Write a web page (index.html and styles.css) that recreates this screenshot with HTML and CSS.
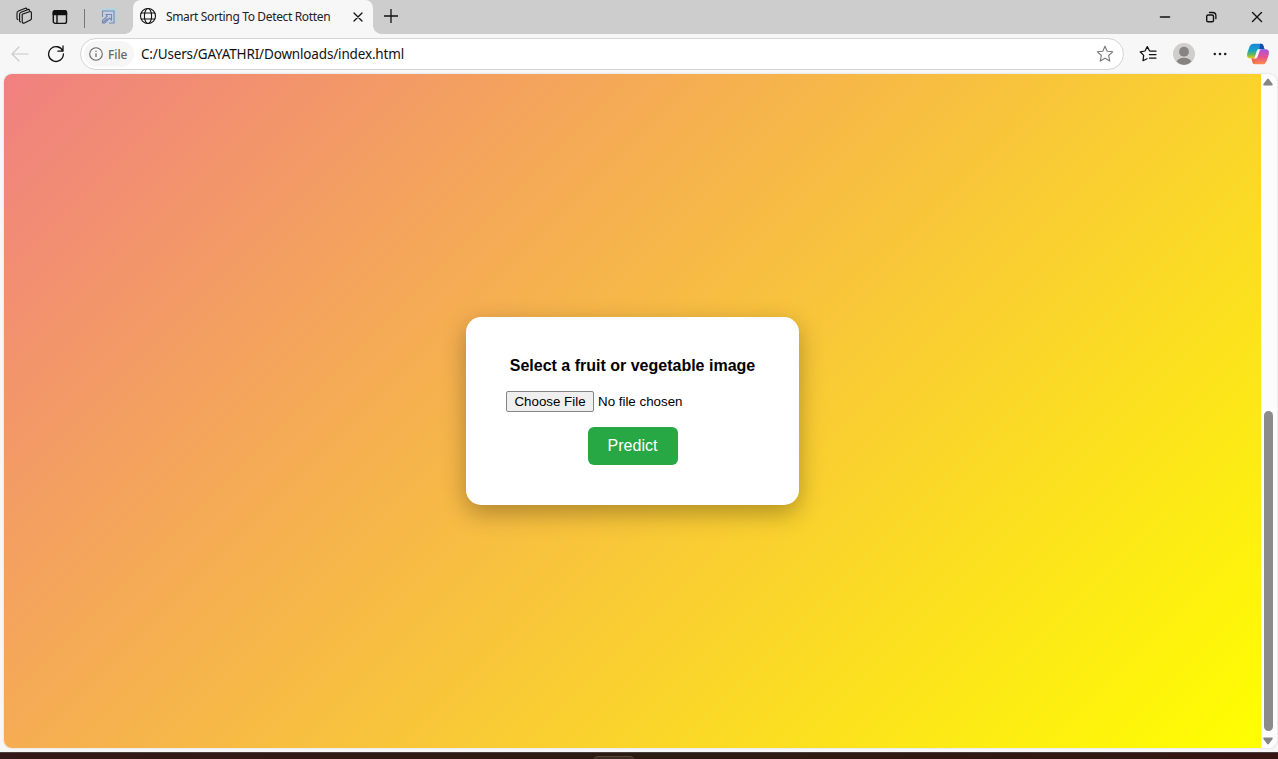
FILE: index.html
```html
<!DOCTYPE html>
<html lang="en">
<head>
<meta charset="utf-8">
<title>Smart Sorting To Detect Rotten</title>
<link rel="stylesheet" href="styles.css">
</head>
<body>
<div class="window">
  <header class="tabstrip">
    <svg class="ico workspaces" width="18" height="18" viewBox="0 0 18 18"><path d="M7.2 7.3 14.4 4.8q2-.6 2 1.3v5.3q0 1-1 1.5l-6 3q-2.2.8-2.2-1.3zM4.6 14V7.2q0-1.4 1.4-2l7.3-2.8M2 11.3V6q0-1.5 1.4-2L10.4 1.2M2 11.2q0 1 .9 1.4M4.6 13.8q0 .9.9 1.2M10.4 1.2q1.2-.2 1.5.8M13.3 2.4q1 0 1.2 1"/></svg>
    <svg class="ico tabs" width="16" height="16" viewBox="0 0 16 16"><rect x="1.3" y="1.8" width="13.2" height="12.6" rx="2"/><path d="M1.3 3.8q0-2 2-2h9.2q2 0 2 2v1.7H1.3z" fill="#111"/><path d="M5 5v9"/></svg>
    <span class="rule"></span>
    <svg class="pinned" width="18" height="18" viewBox="0 0 18 18"><path d="M2 1.500h13.500V14" stroke="#a5d8ea" stroke-width="2" opacity=".8"/><path d="M2.500 3H14v12H2.500z" fill="#c6cfe0"/><path d="M2.500 9V3H14v12H9M2.500 15l5-4.500M6 6.500h5.500V12L9.600 10l-4.800 5H2.500v-2.500l4.800-4.300z" stroke="#7589b3" stroke-width="1.1"/></svg>
    <div class="tab">
      <svg class="ico globe" width="18" height="18" viewBox="0 0 18 18"><circle cx="9" cy="9" r="7.5"/><ellipse cx="9" cy="9" rx="3.6" ry="7.5"/><path d="M2.2 6h13.6M2.2 12h13.6"/></svg>
      <span class="tab-title">Smart Sorting To Detect Rotten</span>
      <svg class="ico close" width="10" height="10" viewBox="0 0 10 10"><path d="m1 1 8 8M9 1 1 9"/></svg>
    </div>
    <svg class="ico plus" width="14" height="14" viewBox="0 0 14 14"><path d="M7 0v14M0 7h14"/></svg>
    <div class="controls">
      <svg class="ico" width="12" height="12" viewBox="0 0 12 12"><path stroke-width="1.6" d="M1.500 6h9"/></svg>
      <svg class="ico" width="12" height="12" viewBox="0 0 12 12"><rect x="1.7" y="4" width="6.8" height="6.8" rx="1.4" stroke-width="1.4"/><path stroke-width="1.3" d="M4.500 1.500h3.200q3.200 0 3.200 3.200v3"/></svg>
      <svg class="ico" width="12" height="12" viewBox="0 0 12 12"><path stroke-width="1.4" d="m1.500 1.500 9 9M10.500 1.500l-9 9"/></svg>
    </div>
  </header>

  <nav class="toolbar">
    <svg class="ico back" width="18" height="16" viewBox="0 0 18 16"><path d="M8 1 1 8l7 7M1 8h16"/></svg>
    <svg class="ico reload" width="18" height="18" viewBox="0 0 18 18"><path d="M15.8 6.1A7.4 7.4 0 1 0 16.4 9M16 1v5.2h-5.1" stroke-width="1.3"/></svg>
    <div class="address">
      <div class="badge">
        <svg width="14" height="14" viewBox="0 0 14 14"><circle cx="7" cy="7" r="6.3"/><path d="M7 6.2V10M7 3.7v1.2" stroke-width="1.2"/></svg>
        <span>File</span>
      </div>
      <span class="url">C:/Users/GAYATHRI/Downloads/index.html</span>
      <svg class="star" width="18" height="18" viewBox="0 0 18 18"><path d="m9 1.3 2.2 5 5.5.5-4.1 3.7 1.2 5.5L9 13.2 4.2 16l1.2-5.5-4.1-3.7 5.5-.5z"/></svg>
    </div>
    <svg class="ico favorites" width="18" height="18" viewBox="0 0 18 18"><path d="M12 6.2 10.6 6 8.3 1.6 6 6l-4.8.8 3.5 3.6L4 15.7l4-2M11.6 6.2H17M10.4 9.6H17M10.4 13H17" stroke-width="1.25"/></svg>
    <svg class="avatar" width="22" height="22" viewBox="0 0 22 22"><circle cx="11" cy="11" r="11" fill="#cfcecb"/><circle cx="11" cy="8.7" r="4.9" fill="#858482"/><path d="M3.6 18.4q2.2-3.7 7.4-3.7t7.4 3.7A11 11 0 0 1 11 22a11 11 0 0 1-7.4-3.6z" fill="#858482"/></svg>
    <svg class="more" width="14" height="4" viewBox="0 0 14 4"><circle cx="1.8" cy="2" r="1.3"/><circle cx="7" cy="2" r="1.3"/><circle cx="12.2" cy="2" r="1.3"/></svg>
    <svg class="copilot" width="22" height="22" viewBox="0 0 22 22">
      <defs>
        <linearGradient id="cool" x1="0" y1="0" x2="0" y2="1"><stop offset="0" stop-color="#1684dc"/><stop offset=".45" stop-color="#18a4c5"/><stop offset=".72" stop-color="#61b85c"/><stop offset="1" stop-color="#efcb25"/></linearGradient>
        <linearGradient id="warm" x1="0" y1="0" x2="0" y2="1"><stop offset="0" stop-color="#a256e8"/><stop offset=".5" stop-color="#e7528f"/><stop offset="1" stop-color="#ff8a47"/></linearGradient>
      </defs>
      <path d="M14 .8q1.7 0 2.3 1.7l1.2 3.8h-3.2q-1.7 0-2.2 1.6l-2 6.2q-.5 1.4-2 1.4H3.4Q.2 15.500 0 12.500q0-1.500.6-3.500l2-5.500Q3.600.8 6.500.8z" fill="url(#cool)"/>
      <path d="M13 .8h1.200q1.600 0 2.100 1.700l1.200 3.800h-3.200q-1.200 0-1.900 1z" fill="#154bb3"/>
      <path d="M8 21.200q-1.700 0-2.300-1.700l-1.200-4h3.200q1.700 0 2.200-1.600l2-6.200q.5-1.400 2-1.400h4.700q3.200 0 3.400 3 0 1.500-.6 3.500l-2 5.700q-1 2.700-3.900 2.700z" fill="url(#warm)"/>
      <path d="M4.500 15.500h3.200q1 0 1.800-1L7 21q-1-.4-1.300-1.500z" fill="#ed7040"/>
      <path d="M11.300 6.300h3q-1.200.2-1.600 1.400l-2.200 6.300q-.6 1.500-2.200 1.500H6.200q1.200-.1 1.600-1.200l2-6.500q.4-1.300 1.500-1.500z" fill="#f8f8f8"/>
    </svg>
  </nav>

  <div class="viewport">
    <main class="page">
      <form class="card">
        <label class="heading">Select a fruit or vegetable image</label>
        <div class="file"><span class="choose">Choose File</span><span class="filename">No file chosen</span></div>
        <button class="predict" type="button">Predict</button>
      </form>
    </main>
    <div class="scrollbar">
      <svg width="10" height="8" viewBox="0 0 10 8"><path d="M4.200.9q.8-.8 1.600 0L9.600 6q.5 1.300-.8 1.500H1.200Q-.1 7.300.4 6z"/></svg>
      <span class="thumb"></span>
      <svg width="10" height="8" viewBox="0 0 10 8"><path d="M4.200 7.100q.8.800 1.600 0L9.600 2Q10.100.7 8.800.5H1.200Q-.1.700.4 2z"/></svg>
    </div>
  </div>
  <footer class="taskbar"><span class="task-hint"></span></footer>
</div>
</body>
</html>
```
FILE: styles.css
```css
* { box-sizing: border-box; }
body { margin: 0; overflow: hidden; font-family: "Noto Sans", sans-serif; }
svg { display: block; flex: none; fill: none; }
.window { width: 1278px; height: 759px; display: flex; flex-direction: column; background: #f7f7f7; }
.ico { stroke: #111; stroke-width: 1.1; stroke-linecap: round; stroke-linejoin: round; }

.tabstrip { height: 34px; flex: none; display: flex; align-items: center; background: #cdcdcd; }
.workspaces { margin-left: 15px; margin-top: -2px; }
.tabs { margin-left: 19px; margin-top: -1px; stroke-width: 1.4; }
.rule { width: 1px; height: 19px; margin-left: 16px; margin-top: 2px; background: #777; }
.pinned { margin-left: 15px; margin-top: -1px; }
.tab { position: relative; width: 240px; height: 34px; margin-left: 15px; padding: 0 10px 2px 6px; display: flex; align-items: center; background: #f7f7f7; border-radius: 8px 8px 0 0; }
.tab::before, .tab::after { content: ""; position: absolute; bottom: 0; width: 8px; height: 8px; }
.tab::before { left: -8px; background: radial-gradient(circle at 0 0, transparent 7.5px, #f7f7f7 8px); }
.tab::after { right: -8px; background: radial-gradient(circle at 100% 0, transparent 7.5px, #f7f7f7 8px); }
.tab-title { width: 187px; margin-left: 9px; font-size: 12px; letter-spacing: -.35px; white-space: nowrap; color: #222; }
.close { margin-top: 2px; stroke-width: 1.3; }
.plus { margin-left: 11px; margin-top: -3px; stroke-width: 1.3; }
.controls { margin-left: auto; padding-right: 15px; display: flex; gap: 34px; }

.toolbar { height: 40px; flex: none; display: flex; align-items: center; }
.back { margin-left: 11px; stroke: #c8c8c8; }
.reload { margin-left: 18px; }
.address { width: 1044px; height: 32px; margin-left: 15px; padding: 0 9px 0 3px; display: flex; align-items: center; background: #fff; border: 1px solid #d2d4d5; border-radius: 16px; }
.badge { width: 50px; height: 26px; padding-left: 5px; display: flex; align-items: center; gap: 5px; border-radius: 13px; background: #f6f6f6; color: #666; font-size: 12px; font-weight: 500; letter-spacing: -.1px; }
.badge svg { stroke: #666; stroke-width: 1.1; }
.url { margin-left: 7px; font-size: 13.5px; letter-spacing: -.16px; white-space: nowrap; color: #111; }
.star { margin-left: auto; stroke: #777; stroke-width: 1.1; stroke-linejoin: round; }
.favorites { margin-left: 15px; }
.avatar { margin-left: 16px; }
.more { margin-left: 18px; fill: #222; }
.copilot { margin-left: 20px; }

.viewport { height: 674px; flex: none; margin: 0 1px 0 4px; display: flex; border-radius: 8px; overflow: hidden; background: #fcfcfc; box-shadow: 0 0 2px #ccc; }
.page { width: 1257px; display: flex; align-items: center; justify-content: center; background: linear-gradient(135deg, lightcoral, yellow); font-family: "Liberation Sans", Arial, sans-serif; }
.card { width: 333px; height: 188px; padding: 40px; display: flex; flex-direction: column; align-items: center; background: #fff; border-radius: 15px; box-shadow: 0 8px 25px rgba(0, 0, 0, .3); }
.heading { font-size: 16px; line-height: 18px; font-weight: bold; white-space: nowrap; }
.file { width: 253px; margin-top: 16px; display: flex; align-items: center; gap: 4px; font-size: 13.333px; line-height: 15px; }
.choose { width: 88px; height: 21px; padding-top: 2px; border: 1px solid #858585; border-radius: 2px; background: #efefef; text-align: center; white-space: nowrap; }
.filename { white-space: nowrap; }
.predict { width: 90px; height: 38px; margin-top: 15px; padding: 0; border: 0; border-radius: 6px; background: #28a745; color: #fff; font: 16px "Liberation Sans", Arial, sans-serif; }
.scrollbar { flex: 1; padding: 4px 0 3px 3px; display: flex; flex-direction: column; align-items: flex-start; }
.scrollbar svg { fill: #858585; margin-left: -1px; }
.thumb { width: 9px; height: 320px; margin: auto 0 6px 0; border-radius: 5px; background: #8b8b8b; }
.taskbar { height: 7px; margin-top: auto; border-top: 1px solid #49403d; background: linear-gradient(90deg, #351817, #2b1b12 50%, #351412); display: flex; justify-content: center; }
.task-hint { width: 40px; height: 4px; margin-top: 3px; margin-right: 50px; border-top: 1px solid #574a3d; border-radius: 4px 4px 0 0; background: #3b2c21; }
```
